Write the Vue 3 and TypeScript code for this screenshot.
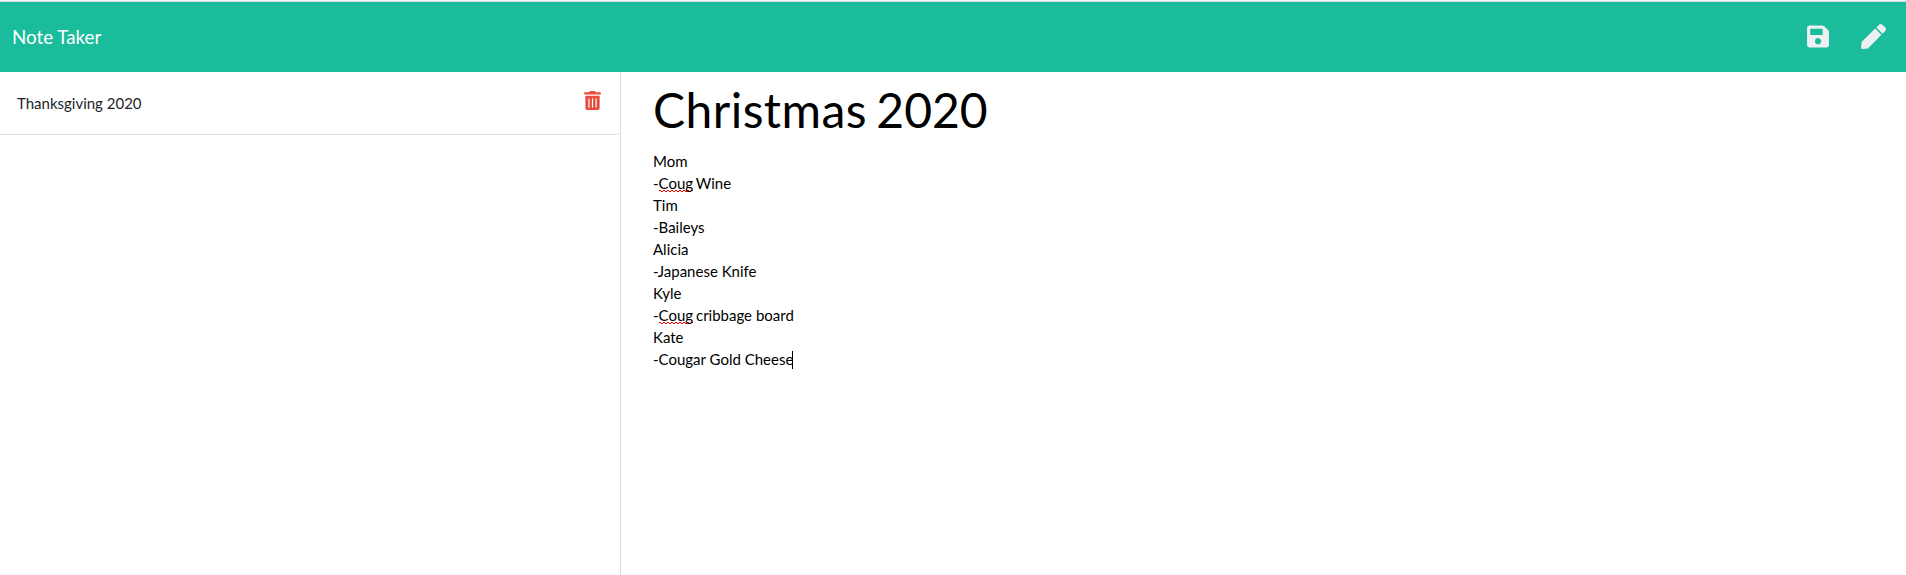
<script setup lang="ts">
interface Segment {
  text: string
  misspelled?: boolean
}

const notes: string[] = ['Thanksgiving 2020']
const title = { name: 'Christmas', year: '2020' }
const lines: Segment[][] = [
  [{ text: 'Mom' }],
  [{ text: '-' }, { text: 'Coug', misspelled: true }, { text: ' Wine' }],
  [{ text: 'Tim' }],
  [{ text: '-Baileys' }],
  [{ text: 'Alicia' }],
  [{ text: '-Japanese Knife' }],
  [{ text: 'Kyle' }],
  [{ text: '-' }, { text: 'Coug', misspelled: true }, { text: ' cribbage board' }],
  [{ text: 'Kate' }],
  [{ text: '-Cougar Gold Cheese' }],
]
</script>

<template>
  <div class="app">
    <header class="navbar">
      <span class="brand">Note Taker</span>
      <div class="actions">
        <svg class="save" viewBox="0 0 448 512" fill="currentColor">
          <path d="M433.941 129.941l-83.882-83.882A48 48 0 0 0 316.118 32H48C21.49 32 0 53.49 0 80v352c0 26.51 21.49 48 48 48h352c26.51 0 48-21.49 48-48V163.882a48 48 0 0 0-14.059-33.941zM224 416c-35.346 0-64-28.654-64-64 0-35.346 28.654-64 64-64s64 28.654 64 64c0 35.346-28.654 64-64 64zm96-304.52V212c0 6.627-5.373 12-12 12H76c-6.627 0-12-5.373-12-12V108c0-6.627 5.373-12 12-12h228.52c3.183 0 6.235 1.264 8.485 3.515l3.48 3.48A11.996 11.996 0 0 1 320 111.48z" />
        </svg>
        <svg class="pen" viewBox="0 0 512 512" fill="currentColor">
          <path d="M290.74 93.24l128.02 128.02-277.99 277.99-114.14 12.6C11.35 513.54-1.56 500.62.14 485.34l12.7-114.22 277.9-277.88zm207.2-19.06l-60.11-60.11c-18.75-18.75-49.16-18.75-67.91 0l-56.55 56.55 128.02 128.02 56.55-56.55c18.75-18.76 18.75-49.16 0-67.91z" />
        </svg>
      </div>
    </header>
    <main class="content">
      <aside class="list">
        <div v-for="note in notes" :key="note" class="item">
          <span>{{ note }}</span>
          <svg class="trash" viewBox="0 0 448 512" fill="currentColor">
            <path d="M32 464a48 48 0 0 0 48 48h288a48 48 0 0 0 48-48V128H32zm272-256a16 16 0 0 1 32 0v224a16 16 0 0 1-32 0zm-96 0a16 16 0 0 1 32 0v224a16 16 0 0 1-32 0zm-96 0a16 16 0 0 1 32 0v224a16 16 0 0 1-32 0zM432 32H312l-9.4-18.7A24 24 0 0 0 281.1 0H166.8a23.72 23.72 0 0 0-21.4 13.3L136 32H16A16 16 0 0 0 0 48v32a16 16 0 0 0 16 16h416a16 16 0 0 0 16-16V48a16 16 0 0 0-16-16z" />
          </svg>
        </div>
      </aside>
      <section class="editor">
        <h1 class="title"><span class="name">{{ title.name }}</span> {{ title.year }}</h1>
        <div class="body">
          <div v-for="(line, i) in lines" :key="i" class="line"><span v-for="(part, j) in line" :key="j" :class="{ misspelled: part.misspelled }">{{ part.text }}</span><i v-if="i === lines.length - 1" class="caret"></i></div>
        </div>
      </section>
    </main>
  </div>
</template>

<style>
body {
  margin: 0;
  background: #fff;
}
</style>

<style scoped>
.app {
  box-sizing: border-box;
  height: 575px;
  display: flex;
  flex-direction: column;
  border-top: 1px solid #f5f6f6;
  overflow: hidden;
  font-family: Lato, "Liberation Sans", sans-serif;
  font-size: 15px;
  color: #212529;
}
.navbar {
  box-sizing: border-box;
  flex: none;
  height: 71px;
  display: flex;
  align-items: center;
  justify-content: space-between;
  padding: 0 20px 0 12px;
  border-top: 1px solid #dadcdd;
  background: #1abc9c;
  color: #fff;
}
.brand {
  font-size: 18.75px;
  line-height: 28px;
}
.actions {
  display: flex;
  align-items: center;
  gap: 32px;
  padding-bottom: 2px;
  color: #ecf0f1;
}
.save {
  width: 22px;
  height: 25px;
}
.pen {
  width: 25px;
  height: 25px;
}
.content {
  flex: 1;
  display: flex;
}
.list {
  box-sizing: border-box;
  flex: none;
  width: 621px;
  border-right: 1px solid #dcdddf;
}
.item {
  box-sizing: border-box;
  height: 63px;
  display: flex;
  justify-content: space-between;
  padding: 19px 19px 0 17px;
  border-bottom: 1px solid #dcdddf;
  border-bottom-right-radius: 4px;
  line-height: 24px;
}
.trash {
  width: 17px;
  height: 19px;
  color: #e74c3c;
}
.editor {
  padding: 2px 0 0 32px;
  color: #000;
}
.title {
  margin: 0;
  font-size: 48px;
  font-weight: 400;
  line-height: 71px;
  word-spacing: -3px;
}
.name {
  letter-spacing: 0.45px;
}
.body {
  margin-top: 5px;
}
.line {
  height: 22px;
  line-height: 22px;
  white-space: pre;
}
.misspelled {
  margin-right: -1px;
  background-image:
    linear-gradient(90deg, #f00 2px, transparent 2px),
    linear-gradient(90deg, transparent 2px, #f00 2px);
  background-size: 4px 1px;
  background-position: 0 calc(100% - 1px), 0 100%;
  background-repeat: repeat-x;
}
.caret {
  display: inline-block;
  width: 1px;
  height: 18px;
  margin-left: -1px;
  vertical-align: -4px;
  background: #000;
}
</style>
